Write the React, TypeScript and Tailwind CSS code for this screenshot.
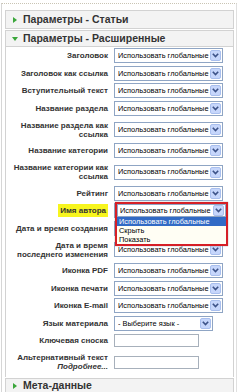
import type { JSX } from "react";

// one row of the "advanced" params table
interface Row {
  label: string;
  control: "select" | "author" | "lang" | "input";
  tall?: boolean;
  more?: boolean;
}

const rows: Row[] = [
  { label: "Заголовок", control: "select" },
  { label: "Заголовок как ссылка", control: "select" },
  { label: "Вступительный текст", control: "select" },
  { label: "Название раздела", control: "select" },
  { label: "Название раздела как\nссылка", control: "select", tall: true },
  { label: "Название категории", control: "select" },
  { label: "Название категории как\nссылка", control: "select", tall: true },
  { label: "Рейтинг", control: "select" },
  { label: "Имя автора", control: "author" },
  { label: "Дата и время создания", control: "select" },
  { label: "Дата и время\nпоследнего изменения", control: "select", tall: true },
  { label: "Иконка PDF", control: "select" },
  { label: "Иконка печати", control: "select" },
  { label: "Иконка E-mail", control: "select" },
  { label: "Язык материала", control: "lang" },
  { label: "Ключевая сноска", control: "input" },
  { label: "Альтернативный текст", control: "input", tall: true, more: true },
];

function ArrowBtn() {
  return (
    <div className="flex h-[11px] w-[11px] shrink-0 items-center justify-center rounded-[2px] border border-[#a9bfee] bg-[#c6d6fb]">
      <svg width="7" height="5" viewBox="0 0 7 5">
        <path d="M0.8 0.8 L3.5 3.6 L6.2 0.8" fill="none" stroke="#3c5287" strokeWidth="1.6" />
      </svg>
    </div>
  );
}

function Select({ text = "Использовать глобальные", w = "w-[109px]" }: { text?: string; w?: string }) {
  return (
    <div className={`flex h-[15px] ${w} items-center border border-[#8fa5c4] bg-white pl-[3px] pr-[1px]`}>
      <span className="flex-1 overflow-hidden whitespace-nowrap text-[7.4px] leading-none text-black">{text}</span>
      <ArrowBtn />
    </div>
  );
}

function AuthorSelect() {
  return (
    <div className="relative h-[15px] w-[109px]">
      <Select />
      {/* opened dropdown, outlined in red */}
      <div className="absolute left-[1px] top-[-1px] z-10 w-[113px] border-2 border-[#d61f26] bg-[#fffef4] shadow-[0_0_1px_#888]">
        <div className="flex h-[13px] items-center border border-[#8fa5c4] bg-white pl-[2px] pr-[1px]">
          <span className="flex-1 overflow-hidden whitespace-nowrap text-[7.4px] leading-none text-black">
            Использовать глобальные
          </span>
          <ArrowBtn />
        </div>
        <div className="flex h-[9px] items-center bg-[#316ac5] pl-[2px] text-[7.4px] leading-none text-white">
          Использовать глобальные
        </div>
        <div className="flex h-[9px] items-center pl-[2px] text-[7.4px] leading-none text-black">Скрыть</div>
        <div className="flex h-[9px] items-center pl-[2px] text-[7.4px] leading-none text-black">Показать</div>
      </div>
    </div>
  );
}

function Input() {
  return <div className="h-[13px] w-[85px] border border-[#a7b0bb] bg-white" />;
}

function Header({ title, open, h = "h-[19px]" }: { title: string; open?: boolean; h?: string }) {
  return (
    <div className={`flex ${h} items-center border border-[#d2d2d2] bg-[#f3f3f3] pl-[2px]`}>
      <div className="flex w-[13px] justify-center">
        {open ? (
          <svg width="6" height="4" viewBox="0 0 6 4">
            <path d="M0 0 H6 L3 4 Z" fill="#3aa63a" />
          </svg>
        ) : (
          <svg width="4" height="6" viewBox="0 0 4 6">
            <path d="M0 0 V6 L4 3 Z" fill="#3aa63a" />
          </svg>
        )}
      </div>
      <span className="ml-[2px] text-[10.5px] font-bold leading-none text-[#333]">{title}</span>
    </div>
  );
}

export default function App(): JSX.Element {
  return (
    <div className="h-[392px] w-[243px] overflow-hidden bg-white pt-[3px] font-['Liberation_Sans',Arial,sans-serif]">
      <div className="ml-[1px] h-[389px] w-[236px] border-l border-r border-t border-l-[#d6d6d6] border-r-[#e0e0e0] border-t-[#c9c4b4] [border-top-style:dotted]">
        <div className="ml-[3px] mt-[6px] w-[229px]">
          <Header title="Параметры - Статьи" />
          <div className="mt-px">
            <Header title="Параметры - Расширенные" open h="h-[17px]" />
          </div>

          <div className="border-l border-r border-[#d2d2d2] bg-white pb-[2px]">
            {rows.map((r) => (
              <div
                key={r.label}
                className={`flex items-center gap-[6px] ${r.tall ? "h-[25px]" : "h-[17.5px]"}`}
              >
                <div className="flex w-[102px] shrink-0 flex-col items-end">
                  <span
                    className={`whitespace-pre-line text-right text-[8px] font-bold leading-[9px] text-[#333] ${
                      r.control === "author" ? "bg-[#f7f51e] px-[2px] py-[2px]" : ""
                    }`}
                  >
                    {r.label}
                  </span>
                  {r.more && (
                    <span className="text-[8px] font-bold italic leading-[9px] text-[#333]">Подробнее...</span>
                  )}
                </div>
                {r.control === "select" && <Select />}
                {r.control === "author" && <AuthorSelect />}
                {r.control === "lang" && <Select text="- Выберите язык -" w="w-[99px]" />}
                {r.control === "input" && <Input />}
              </div>
            ))}
          </div>

          <div className="mt-[1px]">
            <Header title="Мета-данные" h="h-[16px]" />
          </div>
        </div>
      </div>
    </div>
  );
}
